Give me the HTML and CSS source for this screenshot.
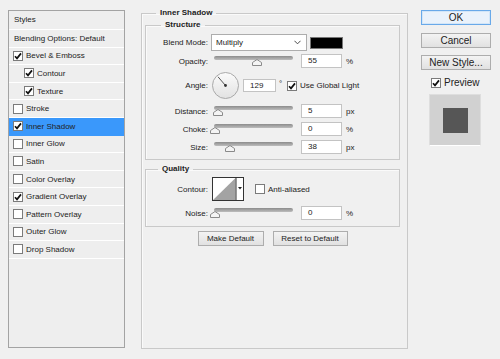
FILE: index.html
```html
<!doctype html>
<html lang="en">
<head>
    <meta charset="UTF-8">
    <title>Layer Style</title>
    <link rel="stylesheet" href="styles.css">
</head>
<body>
    <div class="dialog">
        <div class="styles-list">
            <div class="list-head">Styles</div>
            <div class="list-row plain">Blending Options: Default</div>
            <div class="list-row"><span class="cb"><svg viewBox="0 0 8 8"><path d="M1 4.2 L3 6.4 L7 1.4"/></svg></span>Bevel &amp; Emboss</div>
            <div class="list-row sub"><span class="cb"><svg viewBox="0 0 8 8"><path d="M1 4.2 L3 6.4 L7 1.4"/></svg></span>Contour</div>
            <div class="list-row sub"><span class="cb"><svg viewBox="0 0 8 8"><path d="M1 4.2 L3 6.4 L7 1.4"/></svg></span>Texture</div>
            <div class="list-row"><span class="cb"></span>Stroke</div>
            <div class="list-row selected"><span class="cb"><svg viewBox="0 0 8 8"><path d="M1 4.2 L3 6.4 L7 1.4"/></svg></span>Inner Shadow</div>
            <div class="list-row"><span class="cb"></span>Inner Glow</div>
            <div class="list-row"><span class="cb"></span>Satin</div>
            <div class="list-row"><span class="cb"></span>Color Overlay</div>
            <div class="list-row"><span class="cb"><svg viewBox="0 0 8 8"><path d="M1 4.2 L3 6.4 L7 1.4"/></svg></span>Gradient Overlay</div>
            <div class="list-row"><span class="cb"></span>Pattern Overlay</div>
            <div class="list-row"><span class="cb"></span>Outer Glow</div>
            <div class="list-row"><span class="cb"></span>Drop Shadow</div>
        </div>

        <fieldset class="group main">
            <legend>Inner Shadow</legend>

            <fieldset class="group inner structure">
                <legend>Structure</legend>

                <div class="row blend-row">
                    <span class="label">Blend Mode:</span>
                    <div class="select">
                        <span>Multiply</span>
                        <svg viewBox="0 0 8 5"><path d="M0.5 0.5 L4 4 L7.5 0.5"/></svg>
                    </div>
                    <span class="swatch"></span>
                </div>

                <div class="row opacity-row">
                    <span class="label">Opacity:</span>
                    <div class="slider">
                        <div class="track"></div>
                        <svg class="thumb" style="left:55%" viewBox="0 0 10 7"><polygon points="0.5,6.5 0.5,3.5 5,0.5 9.5,3.5 9.5,6.5"/></svg>
                    </div>
                    <span class="field">55</span>
                    <span class="unit">%</span>
                </div>

                <div class="row angle-row">
                    <span class="label">Angle:</span>
                    <svg class="dial" viewBox="0 0 27 27">
                        <defs>
                            <linearGradient id="dialFill" x1="0" y1="0" x2="0" y2="1">
                                <stop offset="0" stop-color="#fbfbfb"/>
                                <stop offset="1" stop-color="#e2e2e2"/>
                            </linearGradient>
                        </defs>
                        <circle cx="13.5" cy="13.5" r="13" fill="url(#dialFill)" stroke="#a9a9a9"/>
                        <line x1="13.5" y1="13.5" x2="6" y2="4.8" stroke="#555" stroke-width="1"/>
                        <circle cx="13.5" cy="13.5" r="1.4" fill="#333"/>
                    </svg>
                    <span class="field angle-field">129</span>
                    <span class="degree">°</span>
                    <span class="cb global"><svg viewBox="0 0 8 8"><path d="M1 4.2 L3 6.4 L7 1.4"/></svg></span>
                    <span>Use Global Light</span>
                </div>

                <div class="row distance-row">
                    <span class="label">Distance:</span>
                    <div class="slider">
                        <div class="track"></div>
                        <svg class="thumb" style="left:5%" viewBox="0 0 10 7"><polygon points="0.5,6.5 0.5,3.5 5,0.5 9.5,3.5 9.5,6.5"/></svg>
                    </div>
                    <span class="field">5</span>
                    <span class="unit">px</span>
                </div>

                <div class="row">
                    <span class="label">Choke:</span>
                    <div class="slider">
                        <div class="track"></div>
                        <svg class="thumb" style="left:1%" viewBox="0 0 10 7"><polygon points="0.5,6.5 0.5,3.5 5,0.5 9.5,3.5 9.5,6.5"/></svg>
                    </div>
                    <span class="field">0</span>
                    <span class="unit">%</span>
                </div>

                <div class="row">
                    <span class="label">Size:</span>
                    <div class="slider">
                        <div class="track"></div>
                        <svg class="thumb" style="left:20%" viewBox="0 0 10 7"><polygon points="0.5,6.5 0.5,3.5 5,0.5 9.5,3.5 9.5,6.5"/></svg>
                    </div>
                    <span class="field">38</span>
                    <span class="unit">px</span>
                </div>
            </fieldset>

            <fieldset class="group inner quality">
                <legend>Quality</legend>

                <div class="row contour-row">
                    <span class="label">Contour:</span>
                    <svg class="contour" viewBox="0 0 32 24">
                        <rect x="0.5" y="0.5" width="31" height="23" fill="#fff" stroke="#333"/>
                        <polygon points="1,23 23.5,1 23.5,23" fill="#a3a3a3"/>
                        <line x1="24" y1="0.5" x2="24" y2="23.5" stroke="#333"/>
                        <polygon points="26,10 30,10 28,12.5" fill="#222"/>
                    </svg>
                    <span class="cb anti"></span>
                    <span>Anti-aliased</span>
                </div>

                <div class="row noise-row">
                    <span class="label">Noise:</span>
                    <div class="slider">
                        <div class="track"></div>
                        <svg class="thumb" style="left:1%" viewBox="0 0 10 7"><polygon points="0.5,6.5 0.5,3.5 5,0.5 9.5,3.5 9.5,6.5"/></svg>
                    </div>
                    <span class="field">0</span>
                    <span class="unit">%</span>
                </div>
            </fieldset>

            <div class="defaults">
                <button class="btn make">Make Default</button>
                <button class="btn reset">Reset to Default</button>
            </div>
        </fieldset>

        <div class="side">
            <button class="btn primary">OK</button>
            <button class="btn cancel">Cancel</button>
            <button class="btn new-style">New Style...</button>
            <div class="preview-row">
                <span class="cb"><svg viewBox="0 0 8 8"><path d="M1 4.2 L3 6.4 L7 1.4"/></svg></span>
                <span>Preview</span>
            </div>
            <div class="preview">
                <div class="preview-square"></div>
            </div>
        </div>
    </div>
</body>
</html>
```

FILE: styles.css
```css
body {
    margin: 0;
    background: #f0f0f0;
    font-family: 'Liberation Sans', Arial, sans-serif;
    font-size: 8px;
    color: #222;
}

.dialog {
    display: flex;
    align-items: flex-start;
    padding: 8px 0 0 8px;
    height: 359px;
    box-sizing: border-box;
}

/* left list of effects */
.styles-list {
    width: 117px;
    height: 338px;
    margin-top: 2px;
    box-sizing: border-box;
    border: 1px solid #a3a3a3;
    background: #eeeeee;
    flex: none;
}

.list-head {
    height: 18px;
    line-height: 18px;
    padding-left: 5px;
    border-bottom: 1px solid #fff;
}

.list-row {
    height: 16.6px;
    display: flex;
    align-items: center;
    padding-left: 4px;
    border-bottom: 1px solid #fff;
}

.list-row.plain {
    padding-left: 5px;
}

.list-row.sub {
    padding-left: 15px;
}

.list-row.selected {
    background: #3a98fb;
    border-bottom-color: #3a98fb;
}

.cb {
    width: 10px;
    height: 10px;
    box-sizing: border-box;
    border: 1px solid #7b7b7b;
    background: #fff;
    margin-right: 3px;
    display: inline-flex;
    align-items: center;
    justify-content: center;
    flex: none;
}

.cb svg {
    width: 8px;
    height: 8px;
    fill: none;
    stroke: #111;
    stroke-width: 1.7;
}

/* group boxes */
.group {
    margin: 0;
    border: 1px solid #c9c9c9;
    box-shadow: inset 1px 1px 0 #fafafa;
    min-inline-size: auto;
}

.group legend {
    font-weight: bold;
    padding: 0 4px;
    line-height: 10px;
}

.main {
    margin-left: 16px;
    width: 267px;
    height: 341px;
    box-sizing: border-box;
    padding: 0 7px 0 3px;
    flex: none;
}

.main > legend {
    margin-left: 11px;
}

.inner {
    margin-top: 2px;
    padding: 4px 0 5px;
}

.structure > legend {
    margin-left: 15px;
}

.quality {
    margin-top: 4px;
    padding: 0 0 6px;
}

.quality > legend {
    margin-left: 12px;
}

/* rows */
.row {
    display: flex;
    align-items: center;
    height: 14px;
    margin-top: 4px;
}

.label {
    width: 62px;
    text-align: right;
    flex: none;
}

.blend-row {
    height: 17px;
    margin-top: 0;
}

.opacity-row {
    margin-top: 3px;
}

.angle-row {
    height: 27px;
    margin-top: 4px;
}

.distance-row {
    margin-top: 5px;
}

.select {
    margin-left: 3px;
    width: 96px;
    height: 17px;
    box-sizing: border-box;
    border: 1px solid #adadad;
    background: #fff;
    display: flex;
    align-items: center;
    justify-content: space-between;
    padding: 0 5px 0 4px;
}

.select svg {
    width: 7px;
    height: 5px;
    fill: none;
    stroke: #444;
    stroke-width: 1.1;
}

.swatch {
    margin-left: 3px;
    width: 33px;
    height: 12px;
    box-sizing: border-box;
    background: #000;
    border: 1px solid #777;
}

.slider {
    position: relative;
    width: 79px;
    height: 14px;
    margin-left: 6px;
    flex: none;
}

.track {
    margin-top: 2px;
    height: 4px;
    border-radius: 2px;
    background: linear-gradient(#8c8c8c, #bdbdbd);
}

.thumb {
    position: absolute;
    top: 5px;
    width: 10px;
    height: 7px;
    margin-left: -5px;
    fill: #f4f4f4;
    stroke: #8a8a8a;
    stroke-width: 1;
}

.field {
    margin-left: 8px;
    width: 41px;
    height: 14px;
    box-sizing: border-box;
    border: 1px solid #c3c3c3;
    background: #fff;
    padding-left: 6px;
    line-height: 12px;
    flex: none;
}

.unit {
    margin-left: 4px;
}

.dial {
    margin-left: 4px;
    width: 27px;
    height: 27px;
    flex: none;
}

.angle-field {
    margin-left: 4px;
    width: 33px;
    height: 13px;
    line-height: 11px;
}

.degree {
    margin-left: 3px;
    margin-top: -4px;
    width: 8px;
}

.cb.global {
    margin-right: 3px;
}

.contour-row {
    height: 24px;
    margin-top: 3px;
}

.contour {
    margin-left: 4px;
    width: 32px;
    height: 24px;
    flex: none;
}

.cb.anti {
    margin-left: 11px;
    margin-right: 3px;
}

.noise-row {
    margin-top: 5px;
}

/* buttons */
.btn {
    font-family: inherit;
    font-size: 8px;
    color: #222;
    height: 15px;
    padding: 0;
    box-sizing: border-box;
    border: 1px solid #adadad;
    background: linear-gradient(#f3f3f3, #e1e1e1);
    display: flex;
    align-items: center;
    justify-content: center;
}

.defaults {
    display: flex;
    justify-content: center;
    gap: 9px;
    margin-top: 4px;
}

.make {
    width: 66px;
}

.reset {
    width: 75px;
}

.side {
    margin-left: 13px;
    width: 70px;
    display: flex;
    flex-direction: column;
    flex: none;
}

.side .btn {
    width: 70px;
    font-size: 10px;
}

.btn.primary {
    margin-top: 2px;
    border-color: #69a9e9;
    background: #eaf2fb;
    box-shadow: inset 0 0 0 1px #d3e6f8;
}

.btn.cancel {
    margin-top: 8px;
}

.btn.new-style {
    margin-top: 7px;
}

.preview-row {
    margin-top: 7px;
    display: flex;
    align-items: center;
    padding-left: 10px;
    font-size: 10px;
}

.preview {
    margin: 6px 0 0 8px;
    width: 52px;
    height: 52px;
    box-sizing: border-box;
    background: #d1d1d1;
    border: 1px solid #dedede;
    border-bottom-color: #fff;
    display: flex;
    align-items: center;
    justify-content: center;
}

.preview-square {
    width: 25px;
    height: 25px;
    background: #565656;
}
```
